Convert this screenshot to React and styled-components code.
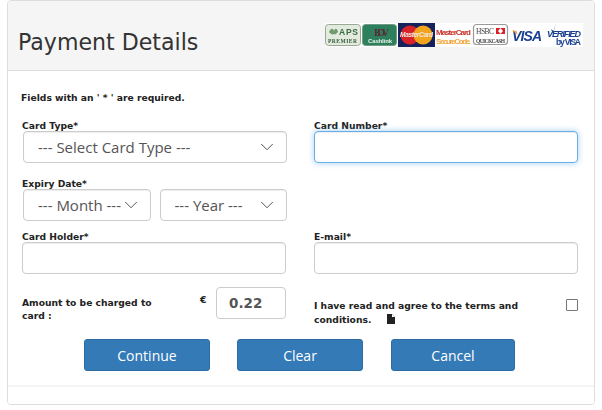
import React from 'react'
import styled, { createGlobalStyle } from 'styled-components'
import { ChevronDown } from 'lucide-react'

const GlobalStyle = createGlobalStyle`
  html, body {
    margin: 0;
    background: #ffffff;
  }
  body {
    font-family: "DejaVu Sans", Verdana, sans-serif;
    color: #333333;
  }
`

const Page = styled.div`
  width: 602px;
  height: 410px;
  padding: 0 7px 5px;
  box-sizing: border-box;
`

const Panel = styled.div`
  height: 405px;
  box-sizing: border-box;
  border: 1px solid #dddddd;
  border-radius: 4px;
  display: flex;
  flex-direction: column;
`

const Heading = styled.div`
  height: 70px;
  box-sizing: border-box;
  background: #f5f5f5;
  border-bottom: 1px solid #dddddd;
  border-radius: 3px 3px 0 0;
  padding: 21px 11px 0 10px;
  display: flex;
  justify-content: space-between;
  align-items: flex-start;
`

const Title = styled.h1`
  margin: 6px 0 0;
  font-size: 22.1px;
  line-height: 28px;
  font-weight: 400;
  font-family: "DejaVu Sans", Verdana, sans-serif;
  color: #333333;
`

const Form = styled.form`
  flex: 1;
  padding: 21px 16px 0 14px;
  display: flex;
  flex-direction: column;
`

const Note = styled.p`
  margin: 0 0 16px -1px;
  font-size: 9.2px;
  line-height: 12px;
  font-weight: 700;
  color: #222222;
`

const Columns = styled.div`
  display: grid;
  grid-template-columns: 264px 264px;
  column-gap: 28px;
`

const Column = styled.div`
  display: flex;
  flex-direction: column;
`

const Field = styled.div`
  display: flex;
  flex-direction: column;
  margin-bottom: ${(p) => p.$gap || 13}px;
`

const Label = styled.label`
  font-size: 9.2px;
  line-height: 12px;
  height: 12px;
  font-weight: 700;
  color: #222222;
  margin-bottom: -1px;
`

const Input = styled.input`
  display: block;
  width: 100%;
  height: 32px;
  box-sizing: border-box;
  border: 1px solid ${(p) => (p.$focused ? '#66afe9' : '#cccccc')};
  border-radius: 4px;
  background: #ffffff;
  outline: none;
  box-shadow: ${(p) =>
    p.$focused
      ? 'inset 0 1px 1px rgba(0,0,0,.075), 0 0 6px rgba(102,175,233,.6)'
      : 'inset 0 1px 1px rgba(0,0,0,.075)'};
`

const SelectRow = styled.div`
  display: flex;
  gap: 9px;
  padding-left: 1px;
  margin-right: -1px;
`

const SelectBox = styled.div`
  flex: 1;
  min-width: 0;
  height: 32px;
  box-sizing: border-box;
  border: 1px solid #cccccc;
  border-radius: 4px;
  background: #ffffff;
  padding: 0 8px 0 14px;
  display: flex;
  align-items: center;
  font-family: "Open Sans", sans-serif;
  font-size: 15px;
  color: #555555;
  box-shadow: inset 0 1px 1px rgba(0, 0, 0, 0.075);

  svg {
    flex-shrink: 0;
  }
`

const SelectText = styled.span`
  flex: 1;
  min-width: 0;
  white-space: nowrap;
`

const AmountRow = styled.div`
  display: flex;
  align-items: flex-start;
  height: 53px;
`

const AmountLabel = styled.div`
  width: 178px;
  padding-top: 9px;
  font-size: 9.2px;
  line-height: 13px;
  font-weight: 700;
  color: #222222;
`

const Euro = styled.span`
  width: 16px;
  padding-top: 7px;
  font-size: 9.5px;
  font-weight: 700;
  color: #222222;
`

const AmountBox = styled.div`
  width: 70px;
  height: 32px;
  box-sizing: border-box;
  border: 1px solid #cccccc;
  border-radius: 4px;
  padding-left: 12px;
  display: flex;
  align-items: center;
  font-size: 13.5px;
  font-weight: 700;
  color: #555555;
`

const TermsRow = styled.div`
  display: flex;
  justify-content: space-between;
  align-items: flex-start;
  padding-top: 13px;
`

const TermsText = styled.div`
  width: 225px;
  font-size: 9.2px;
  line-height: 14px;
  font-weight: 700;
  color: #222222;
`

const DocIcon = styled.svg`
  width: 8px;
  height: 10px;
  margin-left: 16px;
  vertical-align: -1px;
`

const Checkbox = styled.span`
  width: 10px;
  height: 10px;
  margin-top: 0;
  border: 1px solid #767676;
  border-radius: 1px;
  background: #ffffff;
`

const Buttons = styled.div`
  display: flex;
  gap: 27px;
  padding-left: 62px;
  margin-top: -1px;
`

const Button = styled.button`
  width: 126px;
  height: 32px;
  box-sizing: border-box;
  border: 1px solid #2e6da4;
  border-radius: 3px;
  background: #337ab7;
  color: #ffffff;
  font-family: "Open Sans", sans-serif;
  font-size: 14px;
  padding: 0;

  &:last-child {
    width: 124px;
    margin-left: 1px;
  }
`

const Footer = styled.div`
  margin-top: auto;
  height: 17px;
  background: #ffffff;
  border-top: 2px solid #f5f5f5;
  border-radius: 0 0 3px 3px;
`

const LogoStrip = styled.svg`
  width: 258px;
  height: 24px;
  margin-top: 1px;
  display: block;
  background: #ffffff;
`

// the card logos are one blurry strip in the picture
function Logos() {
  return (
    <LogoStrip viewBox="0 0 258 24">
      <defs>
        <filter id="soft">
          <feGaussianBlur stdDeviation="0.35" />
        </filter>
      </defs>
      <g filter="url(#soft)" fontFamily="Liberation Sans" fontWeight="700">
        <rect x="0.500" y="1.500" width="35" height="21" rx="3" fill="#e3ebdf" stroke="#9aa895" />
        <path d="M4 9c2-4 4-4 5-1 1-3 3-3 4 1-2 2-3 3-4 2-2 1-3 0-5-2z" fill="#6f9a6e" />
        <text x="14" y="12" fontSize="8.500" textLength="19" fill="#3b6a45">APS</text>
        <text x="3" y="20" fontSize="5.500" fontFamily="Liberation Serif" textLength="29" fill="#3b5a40">PREMIER</text>

        <rect x="37.500" y="1.500" width="34" height="21" rx="3" fill="#2f7f5b" stroke="#6f9c85" />
        <text x="49" y="13" fontSize="10" fontFamily="Liberation Serif" textLength="15" fill="#5a2a34">BOV</text>
        <text x="43" y="20" fontSize="6" textLength="24" fill="#e6f2e8">Cashlink</text>

        <rect x="73" y="0" width="37" height="24" fill="#14205c" />
        <circle cx="85" cy="12" r="9.500" fill="#d8222a" />
        <circle cx="98" cy="12" r="9.500" fill="#f2a41c" />
        <text x="75" y="14" fontSize="6.600" fontStyle="italic" textLength="33" fill="#f3e9e0">MasterCard</text>

        <text x="111" y="12" fontSize="8" textLength="35" fill="#c8332c">MasterCard</text>
        <text x="111" y="20.500" fontSize="8" textLength="35" fill="#f0a63a">SecureCode.</text>

        <rect x="148.500" y="1.500" width="34" height="20" rx="3" fill="#ffffff" stroke="#9a9a9a" strokeWidth="1.200" />
        <text x="151" y="11" fontSize="7.500" fontWeight="400" fontFamily="Liberation Serif" textLength="18" fill="#444444">HSBC</text>
        <rect x="171" y="5" width="9" height="6" fill="#d8222a" />
        <path d="M175.500 5l-2.500 3 2.500 3 2.500-3z" fill="#ffffff" />
        <text x="151" y="19.500" fontSize="5.500" fontFamily="Liberation Serif" textLength="29" fill="#444444">QUICKCASH</text>

        <text x="187" y="17.500" fontSize="14" fontStyle="italic" textLength="30" fill="#1a3f8f">VISA</text>
        <path d="M187 7l4.500 1 1 4z" fill="#f0a63a" />

        <path d="M226 6l2 5 3-11-2.500 8z" fill="#1a3f8f" />
        <text x="222" y="13.500" fontSize="9" fontStyle="italic" textLength="34" fill="#1a3f8f">VERIFIED</text>
        <text x="231" y="22" fontSize="8.500" textLength="25" fill="#1a3f8f">by VISA</text>
      </g>
    </LogoStrip>
  )
}

function Select({ children }) {
  return (
    <SelectBox>
      <SelectText>{children}</SelectText>
      <ChevronDown size={22} strokeWidth={1} color="#444444" />
    </SelectBox>
  )
}

export default function App() {
  return (
    <Page>
      <GlobalStyle />
      <Panel>
        <Heading>
          <Title>Payment Details</Title>
          <Logos />
        </Heading>
        <Form>
          <Note>Fields with an ' * ' are required.</Note>
          <Columns>
            <Column>
              <Field $gap={15}>
                <Label>Card Type*</Label>
                <SelectRow>
                  <Select>--- Select Card Type ---</Select>
                </SelectRow>
              </Field>
              <Field $gap={10}>
                <Label>Expiry Date*</Label>
                <SelectRow>
                  <Select>--- Month ---</Select>
                  <Select>--- Year ---</Select>
                </SelectRow>
              </Field>
              <Field $gap={13}>
                <Label>Card Holder*</Label>
                <Input />
              </Field>
              <AmountRow>
                <AmountLabel>
                  Amount to be charged to
                  <br />
                  card :
                </AmountLabel>
                <Euro>€</Euro>
                <AmountBox>0.22</AmountBox>
              </AmountRow>
            </Column>
            <Column>
              <Field $gap={68}>
                <Label>Card Number*</Label>
                <Input $focused />
              </Field>
              <Field $gap={12}>
                <Label>E-mail*</Label>
                <Input />
              </Field>
              <TermsRow>
                <TermsText>
                  I have read and agree to the terms and conditions.
                  <DocIcon viewBox="0 0 8 10">
                    <path d="M0 0h5l3 3v7H0z" fill="#222222" />
                    <path d="M5 0v3h3z" fill="#ffffff" />
                  </DocIcon>
                </TermsText>
                <Checkbox />
              </TermsRow>
            </Column>
          </Columns>
          <Buttons>
            <Button type="button">Continue</Button>
            <Button type="button">Clear</Button>
            <Button type="button">Cancel</Button>
          </Buttons>
        </Form>
        <Footer />
      </Panel>
    </Page>
  )
}
